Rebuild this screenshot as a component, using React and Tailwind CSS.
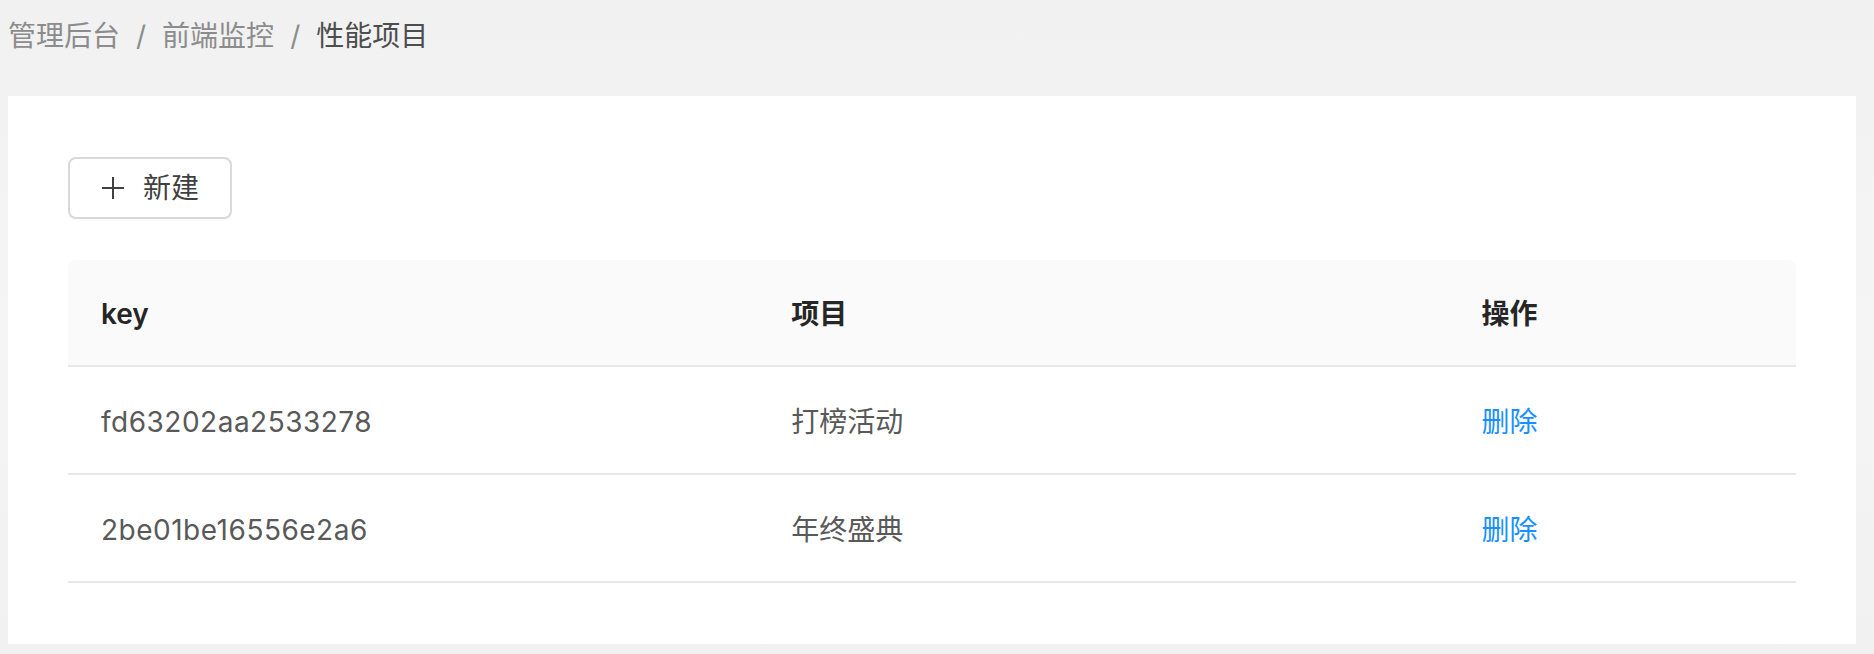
import React from "react";

const rows = [
  { key: "fd63202aa2533278", name: "打榜活动" },
  { key: "2be01be16556e2a6", name: "年终盛典" },
];

function PlusIcon() {
  return (
    <svg width="22" height="22" viewBox="0 0 22 22" fill="none">
      <path d="M11 0V22M0 11H22" stroke="#404040" strokeWidth="2" />
    </svg>
  );
}

export default function App() {
  return (
    <div
      className="min-h-[654px] w-full bg-[#f2f2f2] bg-gradient-to-b from-[#f1f1f1] via-[#f5f5f5] to-[#f1f1f1] text-[28px]"
      style={{ fontFamily: 'Inter, "Noto Sans CJK SC", sans-serif' }}
    >
      <div className="flex h-[96px] items-start pl-2 pt-[14px] leading-[44px]">
        <span className="text-[#8c8c8c]">管理后台</span>
        <span className="mx-4 text-[#8c8c8c]">/</span>
        <span className="text-[#8c8c8c]">前端监控</span>
        <span className="mx-4 text-[#8c8c8c]">/</span>
        <span className="text-[#4d4d4d]">性能项目</span>
      </div>
      <div className="ml-2 mr-[18px] bg-white px-[60px] pt-[61px] pb-[61px]">
        <button className="flex h-[62px] items-center gap-[19px] rounded-[8px] border-2 border-[#d9d9d9] bg-white pl-[32px] pr-[31px] text-[#404040] shadow-[0_2px_0_rgba(0,0,0,0.015)]">
          <PlusIcon />
          <span className="leading-none">新建</span>
        </button>
        <div className="mt-[41px]">
          <div className="grid h-[107px] grid-cols-[40%_40%_20%] items-center rounded-t-[8px] border-b-2 border-[#e8e8e8] bg-[#fafafa] pt-[2px] font-semibold text-[#262626]">
            <div className="px-[33px]">key</div>
            <div className="px-[32px]">项目</div>
            <div className="px-[31px]">操作</div>
          </div>
          {rows.map((r) => (
            <div
              key={r.key}
              className="grid h-[108px] grid-cols-[40%_40%_20%] items-center border-b-2 border-[#e8e8e8] pt-[4px] text-[#595959]"
            >
              <div className="px-[33px] tracking-[0.5px]">{r.key}</div>
              <div className="px-[32px]">{r.name}</div>
              <div className="px-[31px]">
                <span className="cursor-pointer text-[#1890ff]">删除</span>
              </div>
            </div>
          ))}
        </div>
      </div>
    </div>
  );
}
